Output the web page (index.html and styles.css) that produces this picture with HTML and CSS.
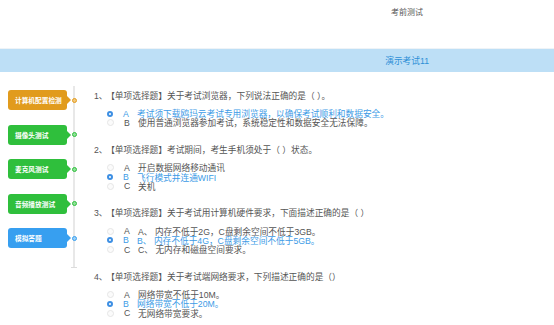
FILE: index.html
```html
<!DOCTYPE html>
<html lang="zh-CN">
<head>
    <meta charset="UTF-8">
    <meta name="viewport" content="width=device-width, initial-scale=1.0">
    <title>考前测试</title>
    <link rel="stylesheet" href="styles.css">
</head>
<body>
    <header class="top-bar">
        <span class="top-title">考前测试</span>
    </header>
    <div class="exam-band">
        <span class="exam-name">演示考试11</span>
    </div>

    <main class="test-page">
        <aside class="steps">
            <div class="step">
                <div class="step-btn orange">计算机配置检测</div>
                <span class="step-dot orange"></span>
            </div>
            <div class="step">
                <div class="step-btn green">摄像头测试</div>
                <span class="step-dot green"></span>
            </div>
            <div class="step">
                <div class="step-btn green">麦克风测试</div>
                <span class="step-dot green"></span>
            </div>
            <div class="step">
                <div class="step-btn green">音频播放测试</div>
                <span class="step-dot green"></span>
            </div>
            <div class="step">
                <div class="step-btn blue">模拟答题</div>
                <span class="step-dot blue"></span>
            </div>
        </aside>

        <section class="questions">
            <div class="question">
                <div class="q-title"><span class="q-num">1、</span>【单项选择题】关于考试浏览器，下列说法正确的是（ ）。</div>
                <div class="option checked"><span class="radio"></span><span class="letter">A</span>考试须下载鸥玛云考试专用浏览器，以确保考试顺利和数据安全。</div>
                <div class="option"><span class="radio"></span><span class="letter">B</span>使用普通浏览器参加考试，系统稳定性和数据安全无法保障。</div>
            </div>
            <div class="question">
                <div class="q-title"><span class="q-num">2、</span>【单项选择题】考试期间，考生手机须处于（ ）状态。</div>
                <div class="option"><span class="radio"></span><span class="letter">A</span>开启数据网络移动通讯</div>
                <div class="option checked"><span class="radio"></span><span class="letter">B</span>飞行模式并连通WIFI</div>
                <div class="option"><span class="radio"></span><span class="letter">C</span>关机</div>
            </div>
            <div class="question">
                <div class="q-title"><span class="q-num">3、</span>【单项选择题】关于考试用计算机硬件要求，下面描述正确的是（ ）</div>
                <div class="option"><span class="radio"></span><span class="letter">A</span>A、 内存不低于2G，C盘剩余空间不低于3GB。</div>
                <div class="option checked"><span class="radio"></span><span class="letter">B</span>B、 内存不低于4G，C盘剩余空间不低于5GB。</div>
                <div class="option"><span class="radio"></span><span class="letter">C</span>C、 无内存和磁盘空间要求。</div>
            </div>
            <div class="question">
                <div class="q-title"><span class="q-num">4、</span>【单项选择题】关于考试端网络要求，下列描述正确的是（）</div>
                <div class="option"><span class="radio"></span><span class="letter">A</span>网络带宽不低于10M。</div>
                <div class="option checked"><span class="radio"></span><span class="letter">B</span>网络带宽不低于20M。</div>
                <div class="option"><span class="radio"></span><span class="letter">C</span>无网络带宽要求。</div>
            </div>
        </section>
    </main>
</body>
</html>
```

FILE: styles.css
```css
body {
    font-family: 'Liberation Sans', 'Noto Sans CJK SC', sans-serif;
    margin: 0;
    padding: 0;
    background-color: #fff;
    color: #555;
    overflow: hidden;
}
.top-bar {
    height: 48px;
    display: flex;
    justify-content: flex-end;
    padding-right: 131px;
    border-bottom: 1px solid #eef3f7;
}
.top-title {
    font-size: 8px;
    line-height: 26px;
    color: #555;
}
.exam-band {
    height: 23px;
    display: flex;
    justify-content: flex-end;
    align-items: center;
    padding-right: 125px;
    background-color: #bddff6;
}
.exam-name {
    font-size: 8.7px;
    color: #2e8fd6;
}

.test-page {
    display: flex;
    align-items: flex-start;
}
.steps {
    position: relative;
    width: 80px;
    flex: none;
    padding-top: 18px;
    padding-bottom: 5px;
}
.steps::before {
    content: "";
    position: absolute;
    left: 73px;
    top: 14px;
    bottom: 0;
    width: 2px;
    background-color: #e8e8e8;
}
.steps::after {
    content: "";
    position: absolute;
    left: 71px;
    bottom: 0;
    width: 6px;
    height: 1px;
    background-color: #dcdcdc;
}
.step {
    display: flex;
    align-items: center;
    height: 20px;
    margin-bottom: 14.5px;
}
.step-btn {
    position: relative;
    width: 52px;
    height: 20px;
    margin-left: 8px;
    padding-left: 7px;
    display: flex;
    align-items: center;
    border-radius: 3px;
    color: #fff;
    font-size: 6.7px;
    font-weight: bold;
    white-space: nowrap;
}
.step-btn::after {
    content: "";
    position: absolute;
    right: -4px;
    top: 6px;
    border-top: 4px solid transparent;
    border-bottom: 4px solid transparent;
    border-left: 4px solid currentColor;
}
.step-dot {
    position: relative;
    z-index: 1;
    width: 3px;
    height: 3px;
    margin-left: 4.5px;
    border-radius: 50%;
    border: 1.2px solid;
    background-color: #fff;
}
.orange { background-color: #e19b1d; border-color: #e19b1d; }
.green { background-color: #2fbf3c; border-color: #2fbf3c; }
.blue { background-color: #379ff0; border-color: #379ff0; }
.step-btn.orange::after { border-left-color: #e19b1d; }
.step-btn.green::after { border-left-color: #2fbf3c; }
.step-btn.blue::after { border-left-color: #379ff0; }
.step-dot.orange { background-color: #f3c77a; }
.step-dot.green { background-color: #8fe198; }
.step-dot.blue { background-color: #9bd0f7; }

.questions {
    flex: 1;
    padding-top: 18px;
    padding-left: 14px;
    font-size: 8.7px;
    white-space: nowrap;
}
.question {
    margin-bottom: 16.5px;
}
.q-title {
    line-height: 12px;
    margin-bottom: 7px;
    color: #555;
}
.q-num {
    margin-right: 3px;
}
.option {
    display: flex;
    align-items: center;
    height: 9.3px;
    padding-left: 13px;
    color: #555;
}
.option .radio {
    width: 5px;
    height: 5px;
    margin-right: 10px;
    border-radius: 50%;
    border: 1px solid #e6e6e6;
    background-color: #fbfbfb;
}
.option .letter {
    width: 14px;
}
.option.checked {
    color: #3d9be6;
}
.option.checked .radio {
    width: 2px;
    height: 2px;
    border: 2.5px solid #3d8fe3;
    background-color: #fff;
}
```
